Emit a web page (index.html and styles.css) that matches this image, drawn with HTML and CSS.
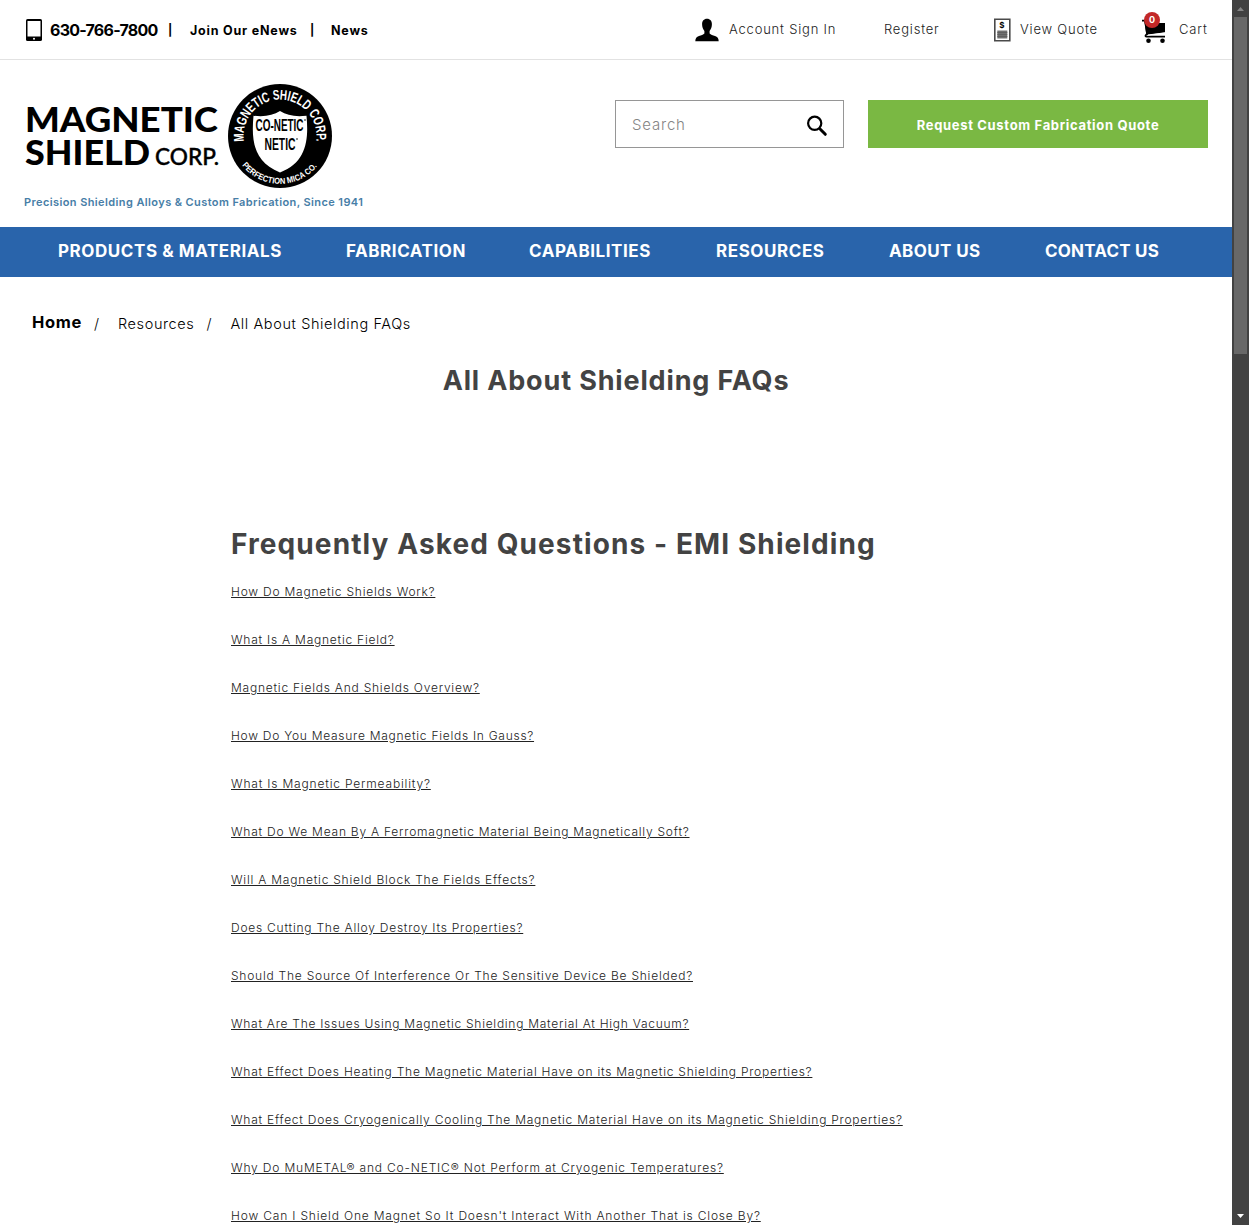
FILE: index.html
```html
<!DOCTYPE html>
<html lang="en">
<head>
<meta charset="utf-8">
<title>All About Shielding FAQs</title>
<link rel="stylesheet" href="styles.css">
</head>
<body>
<div class="page">
  <header>
    <div class="topbar">
      <div class="contact">
        <svg class="phone-icon" width="16" height="22" viewBox="0 0 16 22"><rect width="16" height="22" rx="1.6"/><path fill="#fff" d="M1.5 2h13v15.500h-13z"/><circle cx="8" cy="19.800" r="1" fill="#fff"/></svg>
        <b class="phone">630-766-7800</b><b class="bar">|</b><b class="enews">Join Our eNews</b><b class="bar">|</b><b class="news">News</b>
      </div>
      <nav class="account">
        <a class="signin"><svg width="24" height="24" viewBox="0 0 24 24"><path d="M12 .8c3.200 0 4.900 2.300 4.900 5.500 0 2.800-.9 5.100-2.300 6.700v2.400c1 1.300 3.300 1.900 5.400 2.700 2.500.9 3.600 2.300 3.700 5.100H.3c.1-2.800 1.200-4.200 3.700-5.100 2.100-.8 4.400-1.400 5.400-2.700V13C8 11.400 7.100 9.100 7.100 6.300 7.100 3.100 8.800.8 12 .8z"/></svg><span>Account Sign In</span></a>
        <a class="register"><span>Register</span></a>
        <a class="quote"><svg width="18" height="24" viewBox="0 0 18 24"><path fill="#fff" stroke="#4a4a4a" stroke-width="1.600" d="M1.800 1.300h15v21.400h-15z"/><path fill="#707070" d="M4.300 12.500h10v8h-10z"/><path stroke="#5a5a5a" stroke-width=".8" d="M4.300 14.500h10m-10 2h10m-10 2h10"/><text x="9.300" y="10" text-anchor="middle" font-size="8" font-weight="700">$</text></svg><span>View Quote</span></a>
        <a class="cart"><svg width="26" height="32" viewBox="0 0 26 32"><path d="M3 8.500h3.500l1.200 2.500H24v9.500L5.500 23z"/><path fill="none" stroke="#000" stroke-width="1.700" d="M1 8.700h3.300L6 21.800l-1.300 1.500c-.6.900-.1 1.400.8 1.400H24"/><path stroke="#fff" stroke-width="1" d="m7 23 17-2.200"/><circle cx="7.500" cy="28.700" r="2.300"/><circle cx="21.500" cy="28.700" r="2.300"/></svg><i class="badge">0</i><span>Cart</span></a>
      </nav>
    </div>
    <div class="brandbar">
      <div class="brand">
        <svg class="logo" width="310" height="106" viewBox="0 0 310 106">
          <defs><path id="arc-top" d="M219.900 58.500A36.500 36.500 0 1 1 292.100 58.500"/><path id="arc-bottom" d="M217.500 81.500A48 48 0 0 0 294.500 81.500"/></defs>
          <g class="wordmark">
            <text x="1" y="49" font-size="35" textLength="193" lengthAdjust="spacingAndGlyphs">MAGNETIC</text>
            <text x="1" y="82.300" font-size="35" textLength="125" lengthAdjust="spacingAndGlyphs">SHIELD</text>
            <text class="corp" x="131" y="82.300" font-size="22.500" textLength="64" lengthAdjust="spacingAndGlyphs">CORP.</text>
          </g>
          <circle cx="256" cy="53" r="52"/>
          <path fill="#fff" d="M256 28c7 4.300 15 6 26.500 4.700 2.200 23.500.5 46.500-26.500 56.800-27-10.300-28.700-33.300-26.500-56.800 11.500 1.300 19.500-.4 26.500-4.700z"/>
          <g class="seal">
            <text x="231.500" y="48" font-size="16" textLength="48" lengthAdjust="spacingAndGlyphs">CO-NETIC</text>
            <text x="240.500" y="67" font-size="16" textLength="31" lengthAdjust="spacingAndGlyphs">NETIC</text>
            <circle cx="281" cy="37" r=".8"/><circle cx="273" cy="56" r=".8"/>
            <text class="rim" font-size="14"><textPath href="#arc-top" textLength="125" lengthAdjust="spacingAndGlyphs">MAGNETIC SHIELD CORP.</textPath></text>
            <text class="rim" font-size="8.500"><textPath href="#arc-bottom" startOffset="1" textLength="86" lengthAdjust="spacingAndGlyphs">PERFECTION MICA CO.</textPath></text>
          </g>
        </svg>
        <p class="tagline"><span>Precision Shielding Alloys &amp; Custom Fabrication, Since 1941</span></p>
      </div>
      <div class="search"><span>Search</span><svg width="22" height="22" viewBox="0 0 22 22" fill="none" stroke="#000"><circle cx="8.700" cy="8.300" r="6.600" stroke-width="2.200"/><path stroke-width="3" stroke-linecap="round" d="m14.300 14.300 5 5"/></svg></div>
      <a class="cta"><span>Request Custom Fabrication Quote</span></a>
    </div>
    <nav class="mainnav">
      <a class="n1">PRODUCTS &amp; MATERIALS</a><a class="n2">FABRICATION</a><a class="n3">CAPABILITIES</a><a class="n4">RESOURCES</a><a class="n5">ABOUT US</a><a class="n6">CONTACT US</a>
    </nav>
  </header>
  <main>
    <div class="crumbs"><b>Home</b><i>/</i><span class="c1">Resources</span><i>/</i><span class="c2">All About Shielding FAQs</span></div>
    <h1><span>All About Shielding FAQs</span></h1>
    <section class="faq">
      <h2><span>Frequently Asked Questions - EMI Shielding</span></h2>
      <ul>
        <li><a>How Do Magnetic Shields Work?</a></li>
        <li><a>What Is A Magnetic Field?</a></li>
        <li><a>Magnetic Fields And Shields Overview?</a></li>
        <li class="snug"><a>How Do You Measure Magnetic Fields In Gauss?</a></li>
        <li class="wide"><a>What Is Magnetic Permeability?</a></li>
        <li><a>What Do We Mean By A Ferromagnetic Material Being Magnetically Soft?</a></li>
        <li><a>Will A Magnetic Shield Block The Fields Effects?</a></li>
        <li><a>Does Cutting The Alloy Destroy Its Properties?</a></li>
        <li><a>Should The Source Of Interference Or The Sensitive Device Be Shielded?</a></li>
        <li class="snug"><a>What Are The Issues Using Magnetic Shielding Material At High Vacuum?</a></li>
        <li><a>What Effect Does Heating The Magnetic Material Have on its Magnetic Shielding Properties?</a></li>
        <li><a>What Effect Does Cryogenically Cooling The Magnetic Material Have on its Magnetic Shielding Properties?</a></li>
        <li class="wide"><a>Why Do MuMETAL® and Co-NETIC® Not Perform at Cryogenic Temperatures?</a></li>
        <li class="wide"><a>How Can I Shield One Magnet So It Doesn't Interact With Another That is Close By?</a></li>
      </ul>
    </section>
  </main>
</div>
<div class="scrollbar"><svg width="17" height="17"><path fill="#868686" d="M5 11h7L8.500 7z"/></svg><div class="thumb"></div><svg class="down" width="17" height="17"><path fill="#fff" d="M5 6h7l-3.500 4z"/></svg></div>
</body>
</html>
```
FILE: styles.css
```css
* { box-sizing: border-box; }
body { margin: 0; height: 1225px; display: flex; overflow: hidden; background: #fff; font-family: Inter, "Liberation Sans", sans-serif; color: #000; }
.page { width: 1232px; height: 1225px; overflow: hidden; white-space: nowrap; }
svg { display: block; flex: none; }

.topbar { height: 60px; border-bottom: 1px solid #e2e2e2; display: flex; justify-content: space-between; }
.contact { display: flex; align-items: center; padding-left: 26px; font-size: 12.5px; letter-spacing: .8px; }
.phone { width: 109px; margin: 0 9px 0 8px; font-size: 16px; font-weight: 700; letter-spacing: -.75px; }
.bar { width: 20px; font-size: 11.5px; font-weight: 700; padding-top: 1px; }
.enews { width: 111px; margin-left: 2px; margin-right: 9px; padding-top: 2px; }
.enews + .bar { width: 21px; }
.news { padding-top: 2px; }
.account { display: flex; align-items: center; font-size: 13px; font-weight: 300; color: #222; letter-spacing: .8px; }
.account a { display: flex; align-items: center; height: 60px; position: relative; }
.account span { padding-bottom: 2px; }
.signin { width: 189px; gap: 10px; }
.register { width: 109px; }
.quote { width: 148px; gap: 9px; }
.cart { width: 91px; gap: 12px; }
.cart svg { margin-top: -4px; }
.badge { position: absolute; left: 3px; top: 12px; width: 16px; height: 16px; border-radius: 50%; background: #c22828; color: #fff; font: 700 9px/16px Inter, sans-serif; letter-spacing: 0; text-align: center; }

.brandbar { height: 167px; display: flex; align-items: flex-start; padding: 23px 24px 0; }
.brand { width: 591px; }
.tagline { margin: 5px 0 0; font-size: 11px; line-height: 16px; font-weight: 600; color: #477ea7; letter-spacing: .4px; }
.logo .wordmark { font-family: Lato, sans-serif; font-weight: 900; }
.logo .corp { font-weight: 500; stroke: #000; stroke-width: .4px; }
.logo .seal { font-family: "Liberation Sans Narrow", "Liberation Sans", sans-serif; font-weight: 700; }
.logo .rim { fill: #fff; }
.search { width: 229px; height: 48px; margin: 17px 24px 0 0; padding: 3px 15px 0 16px; border: 1px solid #969696; display: flex; align-items: center; justify-content: space-between; font-size: 15px; font-weight: 300; color: #858585; letter-spacing: .8px; }
.search span { padding-bottom: 2px; }
.cta { width: 340px; height: 48px; margin-top: 17px; padding-top: 2px; background: #7ab843; color: #fff; font-size: 13px; font-weight: 700; letter-spacing: .67px; display: flex; align-items: center; justify-content: center; }

.mainnav { height: 50px; background: #2964ab; padding-left: 58px; display: flex; line-height: 48px; font-size: 17px; font-weight: 700; letter-spacing: .57px; color: #fff; }
.n1 { width: 288px; } .n2 { width: 183px; } .n3 { width: 187px; } .n4 { width: 173px; }
.n5 { width: 156px; letter-spacing: .4px; }
.n6 { letter-spacing: .2px; }

.crumbs { display: flex; padding: 35px 0 0 32px; line-height: 24px; font-size: 14.500px; font-weight: 300; letter-spacing: .6px; }
.crumbs b { width: 62px; font-size: 16.500px; line-height: 20px; font-weight: 700; letter-spacing: .7px; }
.crumbs i { width: 24px; font-style: normal; }
.c1 { width: 88.500px; }
h1, h2 { margin: 0; font-size: 27px; line-height: 34px; font-weight: 700; color: #434343; }
h1 { margin-top: 28px; text-align: center; letter-spacing: .85px; }
h2 { font-size: 28px; letter-spacing: 1.1px; }
.faq { padding: 129px 0 0 231px; }
ul { list-style: none; margin: 7px 0 0; padding: 0; }
li { height: 48px; line-height: 48px; font-size: 12px; font-weight: 300; color: #222; letter-spacing: .77px; }
li.snug { letter-spacing: .73px; }
li.wide { letter-spacing: .82px; }
li a { text-decoration: underline; text-underline-offset: 1px; }

.scrollbar { width: 17px; height: 1225px; background: #424242; display: flex; flex-direction: column; }
.thumb { width: 13px; height: 337px; margin-left: 2px; background: #686868; }
.down { margin-top: auto; }
```
